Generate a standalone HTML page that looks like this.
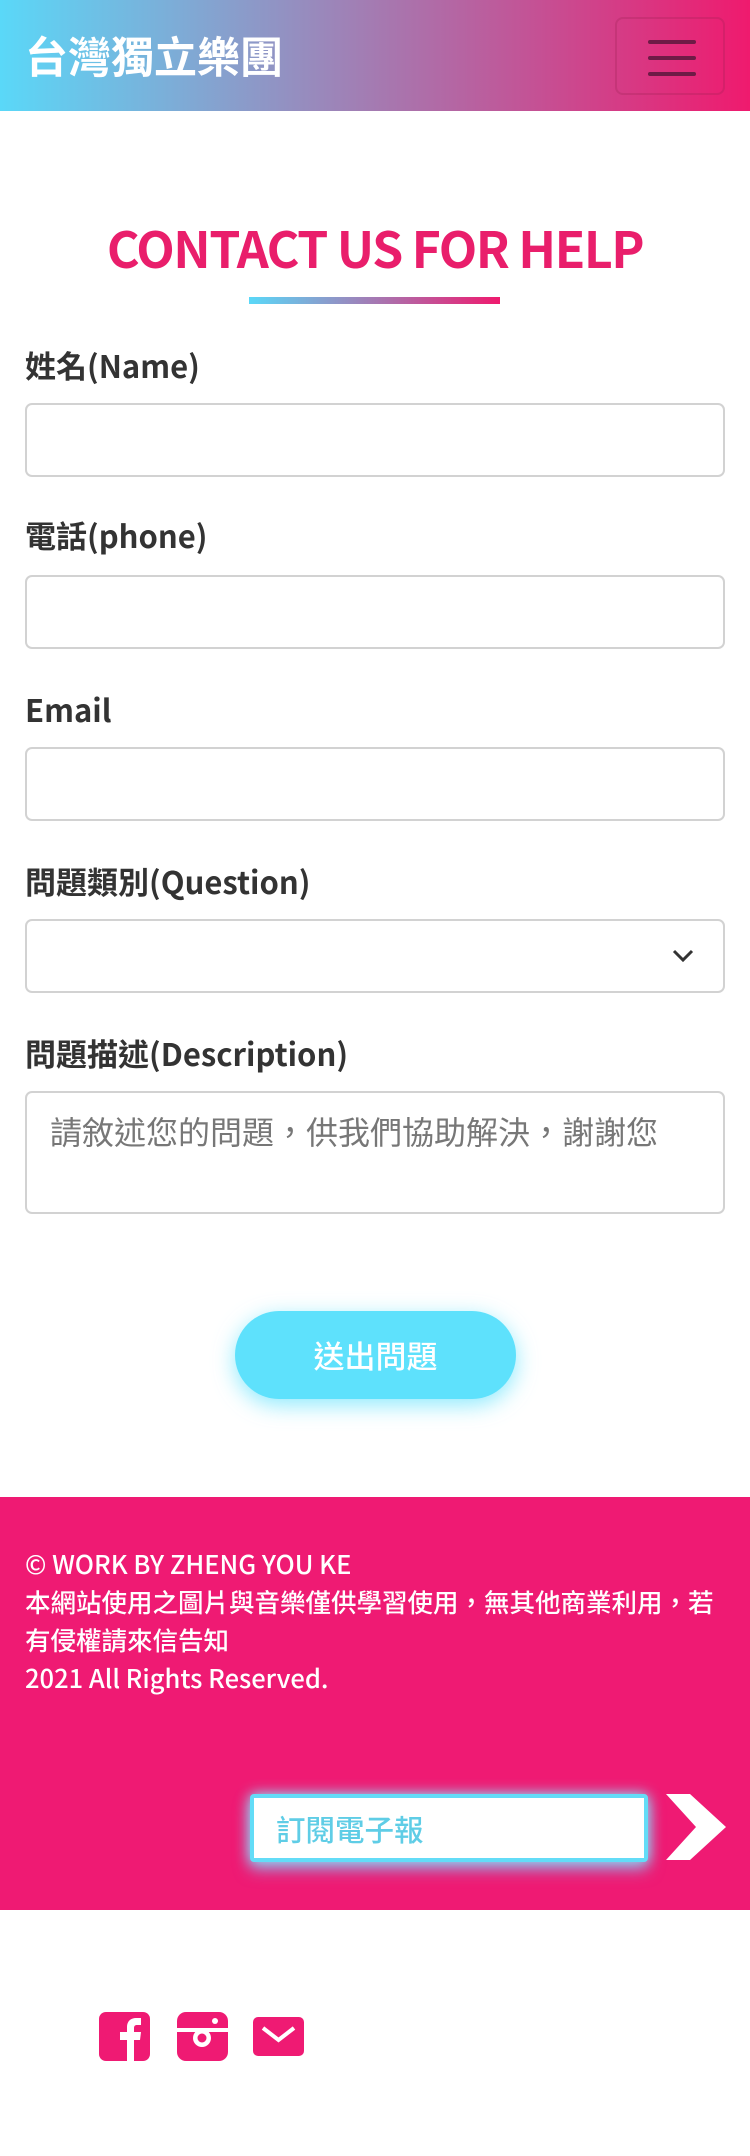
<!DOCTYPE html>
<html><head><meta charset="utf-8">
<style>
*{box-sizing:border-box;margin:0;padding:0}
body{width:750px;height:2156px;background:#fff;font-family:"Liberation Sans","Noto Sans CJK TC",sans-serif;position:relative;overflow:hidden;color:#333}
.hdr{position:absolute;left:0;top:0;width:750px;height:111px;background:linear-gradient(90deg,#5ad8f8,#9d84b8 45%,#ef1a6e)}
.brand{position:absolute;left:25px;top:29px;font-size:43px;font-weight:bold;color:#fff;line-height:52px;font-family:"Noto Sans CJK TC",sans-serif}
.menu{position:absolute;left:615px;top:17px;width:110px;height:78px;border:2px solid rgba(150,30,80,.25);border-radius:8px}
.menu i{position:absolute;left:31px;width:48px;height:4px;border-radius:2px;background:#6e1b46}
h1{position:absolute;left:0;width:750px;top:212px;text-align:center;color:#e91e6b;font-size:50px;font-weight:bold;font-family:"Noto Sans CJK TC",sans-serif;line-height:70px;letter-spacing:-1.5px}
.bar{position:absolute;left:249px;top:297px;width:251px;height:7px;background:linear-gradient(90deg,#5ad8f8,#ef1a6e)}
.lbl{position:absolute;left:25px;font-size:31px;font-weight:bold;color:#333;font-family:"Noto Sans CJK TC",sans-serif;line-height:40px}
.inp{position:absolute;left:25px;width:700px;height:74px;border:2px solid #d2d2d2;border-radius:7px;background:#fff}
.ph{position:absolute;left:23px;top:18px;font-size:32px;color:#777;font-family:"Noto Sans CJK TC",sans-serif;line-height:40px}
.btn{position:absolute;left:235px;top:1311px;width:281px;height:88px;border-radius:44px;background:#5ee1fc;box-shadow:0 6px 22px rgba(94,225,252,.7);color:#fff;font-size:31px;text-align:center;line-height:88px;font-family:"Noto Sans CJK TC",sans-serif;font-weight:500}
.ft{position:absolute;left:0;top:1497px;width:750px;height:413px;background:#ef1a73}
.ftx{position:absolute;left:25px;top:48px;color:#fff;font-size:25.5px;line-height:38px;font-family:"Noto Sans CJK TC",sans-serif;width:740px;white-space:nowrap;font-weight:500}
.sub{position:absolute;left:250px;top:297px;width:398px;height:68px;background:#fff;border:4px solid #63dcf7;border-radius:4px;box-shadow:0 0 14px #8ae9ff,0 8px 16px rgba(120,200,255,.6)}
.sub span{position:absolute;left:22px;top:12px;font-size:29.5px;color:#5fcde6;font-family:"Noto Sans CJK TC",sans-serif;line-height:38px;font-weight:500}
</style></head><body>
<div class="hdr"><div class="brand">台灣獨立樂團</div>
<div class="menu"><i style="top:21px"></i><i style="top:37px"></i><i style="top:53px"></i></div></div>
<h1>CONTACT US FOR HELP</h1>
<div class="bar"></div>
<div class="lbl" style="top:345px">姓名(Name)</div>
<div class="inp" style="top:403px"></div>
<div class="lbl" style="top:515px">電話(phone)</div>
<div class="inp" style="top:575px"></div>
<div class="lbl" style="top:689px">Email</div>
<div class="inp" style="top:747px"></div>
<div class="lbl" style="top:861px">問題類別(Question)</div>
<div class="inp" style="top:919px"><svg style="position:absolute;left:645px;top:28px" width="22" height="14" viewBox="0 0 22 14"><path d="M2 2l9 9 9-9" fill="none" stroke="#333" stroke-width="3"/></svg></div>
<div class="lbl" style="top:1033px">問題描述(Description)</div>
<div class="inp" style="top:1091px;height:123px"><div class="ph">請敘述您的問題，供我們協助解決，謝謝您</div></div>
<div class="btn">送出問題</div>
<div class="ft">
<div class="ftx">© WORK BY ZHENG YOU KE<br>本網站使用之圖片與音樂僅供學習使用，無其他商業利用，若<br>有侵權請來信告知<br>2021 All Rights Reserved.</div>
<div class="sub"><span>訂閱電子報</span></div>
<svg style="position:absolute;left:666px;top:297px" width="60" height="66" viewBox="0 0 60 66"><path d="M0 0h24l36 33-36 33H0l30-33z" fill="#fff"/></svg>
</div>
<svg style="position:absolute;left:99px;top:2012px" width="51" height="49" viewBox="0 0 51 49"><rect width="51" height="49" rx="7" fill="#ef1a73"/><path d="M28 49V28h-7v-8h7v-5c0-6 4-9 9-9h5v7h-4c-2 0-3 1-3 3v4h7l-1 8h-6v21z" fill="#fff"/></svg>
<svg style="position:absolute;left:177px;top:2012px" width="51" height="49" viewBox="0 0 51 49"><rect width="51" height="49" rx="9" fill="#ef1a73"/><rect x="0" y="16" width="51" height="4" fill="#fff"/><circle cx="25" cy="26" r="9" fill="#fff"/><circle cx="25" cy="26" r="4.5" fill="#ef1a73"/><circle cx="38" cy="9" r="3" fill="#fff"/></svg>
<svg style="position:absolute;left:253px;top:2017px" width="51" height="39" viewBox="0 0 51 39"><rect width="51" height="39" rx="5" fill="#ef1a73"/><path d="M10 11l15.5 12L41 11" fill="none" stroke="#fff" stroke-width="4"/></svg>
</body></html>
